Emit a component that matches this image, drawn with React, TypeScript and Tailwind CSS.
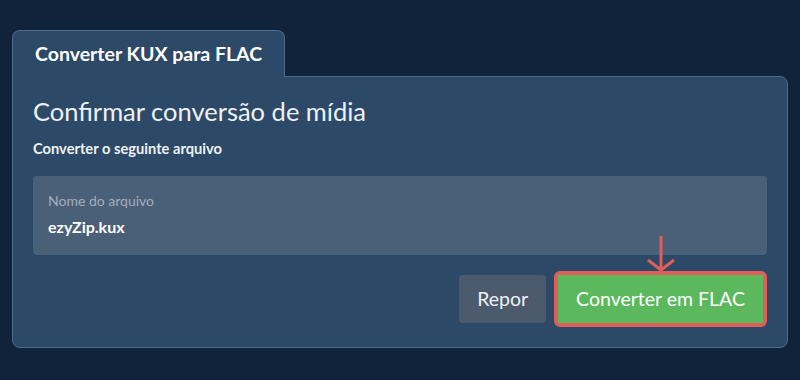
export default function App() {
  return (
    <div
      className="min-h-screen w-full bg-[#10233a] px-3 pt-[30px]"
      style={{ fontFamily: 'Lato, "Open Sans", sans-serif' }}
    >
      <div className="w-[776px]">
        <div className="relative z-10 -mb-px inline-flex h-[47px] items-center rounded-t-lg border border-b-0 border-[#4d6a8b] bg-[#2d4968] px-[22px]">
          <span className="text-[19.5px] font-bold text-white">Converter KUX para FLAC</span>
        </div>
        <div className="rounded-b-lg rounded-tr-lg border border-[#4d6a8b] bg-[#2d4968] px-5 pb-5 pt-[19px]">
          <h1 className="text-[25.5px] leading-[1.2] text-[#eef1f4]">Confirmar conversão de mídia</h1>
          <p className="mt-[11px] text-[14.7px] font-bold leading-5 text-[#eef1f4]">Converter o seguinte arquivo</p>
          <div className="mt-[18px] h-[79px] rounded bg-[#4a6078] px-[15px] pt-[17px]">
            <div className="text-[14px] leading-4 text-[#a3aebb]">Nome do arquivo</div>
            <div className="mt-[8px] text-[16px] font-bold leading-5 text-white">ezyZip.kux</div>
          </div>
          <div className="mt-4 flex items-center justify-end gap-2">
            <button className="h-12 rounded bg-[#4b5b6d] px-[18px] text-[19.5px] text-[#eef1f4]">Repor</button>
            <div className="relative rounded-md border-4 border-[#de5f5a]">
              <svg
                className="absolute bottom-[calc(100%+3px)] left-1/2 -translate-x-1/2"
                width="30"
                height="36"
                viewBox="0 0 30 36"
                fill="none"
                stroke="#de5f5a"
                strokeWidth="3"
              >
                <path d="M15 0V34" />
                <path d="M2 24L15 34L28 24" />
              </svg>
              <button className="block h-12 bg-[#5cb85c] px-[18px] text-[19.5px] text-white">Converter em FLAC</button>
            </div>
          </div>
        </div>
      </div>
    </div>
  );
}
